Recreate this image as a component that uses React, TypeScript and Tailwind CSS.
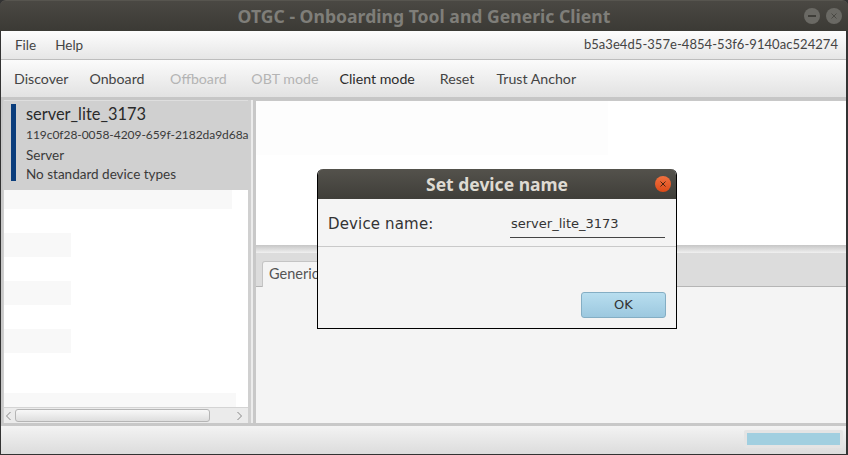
import React from "react";

function Rows() {
  return (
    <div className="flex-1 flex flex-col min-h-0 bg-white overflow-hidden">
      <div className="h-[19px] w-[228px] shrink-0 bg-[#f8f8f8]" />
      <div className="h-[24px] shrink-0" />
      <div className="h-[24px] w-[67px] shrink-0 bg-[#f8f8f8]" />
      <div className="h-[24px] shrink-0" />
      <div className="h-[24px] w-[67px] shrink-0 bg-[#f8f8f8]" />
      <div className="h-[24px] shrink-0" />
      <div className="h-[24px] w-[67px] shrink-0 bg-[#f8f8f8]" />
      <div className="h-[40px] shrink-0" />
      <div className="h-[14px] w-[232px] shrink-0 bg-[#f8f8f8]" />
    </div>
  );
}

export default function App() {
  return (
    <div className="relative w-[848px] h-[455px] overflow-hidden bg-[#333] font-['Lato','Liberation_Sans',sans-serif]">
      <div className="h-[31px] rounded-t-[6px] bg-gradient-to-b from-[#4a4843] to-[#3b3a35] flex items-center justify-center relative border-t border-[#57554f]">
        <span className="font-['Noto_Sans',sans-serif] font-bold text-[17.6px] text-[#7f7e79]">
          OTGC - Onboarding Tool and Generic Client
        </span>
        <div className="absolute right-[6px] top-[7px] flex gap-[6px]">
          <div className="w-[16px] h-[16px] rounded-full bg-[#6a6964] flex items-center justify-center">
            <div className="w-[8px] h-[1.5px] bg-[#3f3e39]" />
          </div>
          <div className="w-[16px] h-[16px] rounded-full bg-[#6a6964] flex items-center justify-center">
            <svg width="8" height="8" viewBox="0 0 8 8">
              <path d="M1.5 1.5l5 5M6.5 1.5l-5 5" stroke="#4a4944" strokeWidth="1" />
            </svg>
          </div>
        </div>
      </div>
      <div className="h-[423px] ml-px mr-[2px] flex flex-col bg-[#f4f4f4]">
        <div className="h-[29px] shrink-0 bg-gradient-to-b from-[#fdfdfd] to-[#e6e6e6] border-b border-[#bdbdbd] flex items-center justify-between pl-[14px] pr-[8px] text-[13.5px] text-[#444]">
          <div className="flex gap-[19px]">
            <span>File</span>
            <span>Help</span>
          </div>
          <span className="text-[13px] tracking-[0.05px]">b5a3e4d5-357e-4854-53f6-9140ac524274</span>
        </div>
        <div className="h-[40px] shrink-0 bg-gradient-to-b from-[#fbfbfb] to-[#e2e2e2] border-b-[3px] border-[#c6c6c6] flex items-center pl-[13px] text-[14.2px] text-[#444]">
          <span>Discover</span>
          <span className="ml-[21px]">Onboard</span>
          <span className="ml-[25.6px] text-[#b4b4b4]">Offboard</span>
          <span className="ml-[24.6px] text-[#b4b4b4]">OBT mode</span>
          <span className="ml-[21px] text-[#2c2c2c]">Client mode</span>
          <span className="ml-[25px]">Reset</span>
          <span className="ml-[22px]">Trust Anchor</span>
        </div>
        <div className="flex-1 flex min-h-0 bg-[#c8c8c8]">
          <div className="w-[248px] shrink-0 ml-[2px] flex flex-col bg-white border-r-[3px] border-l-[1px] border-[#d0d0d0]">
            <div className="h-[90px] shrink-0 bg-[#d0d0d0] border-t border-[#dedede] relative pl-[22px] pt-[2px] text-[#3a3a3a]">
              <div className="absolute left-[7px] top-[3px] w-[5px] h-[77px] bg-[#0a3d7c]" />
              <div className="text-[16.4px] leading-[22px] text-[#2a2a2a]">server_lite_3173</div>
              <div className="text-[12px] leading-[20px] tracking-[-0.05px] whitespace-nowrap">119c0f28-0058-4209-659f-2182da9d68a</div>
              <div className="text-[13.5px] leading-[20px]">Server</div>
              <div className="text-[13.5px] leading-[19px]">No standard device types</div>
            </div>
            <Rows />
            <div className="h-[16px] shrink-0 bg-[#ebebeb] border-t border-[#d4d4d4] flex items-center justify-between pl-px">
              <svg width="7" height="10" viewBox="0 0 7 10"><path d="M5.5 1L1.5 5l4 4" fill="none" stroke="#888" /></svg>
              <div className="w-[195px] h-[13px] rounded-[3px] border border-[#b5b5b5] bg-gradient-to-b from-[#f8f8f8] to-[#dedede] mr-auto ml-[3px]" />
              <svg width="7" height="10" viewBox="0 0 7 10" className="mr-[5px]"><path d="M1.5 1l4 4-4 4" fill="none" stroke="#888" /></svg>
            </div>
          </div>
          <div className="w-[2px] shrink-0 bg-[#ececec]" />
          <div className="flex-1 flex flex-col min-w-0 mt-[1px] ml-[3px]">
            <div className="h-[144px] shrink-0 bg-white">
              <div className="h-[54px] w-[352px] bg-[#fdfdfd]" />
            </div>
            <div className="h-[8px] shrink-0 bg-gradient-to-b from-[#c6c6c6] to-[#f0f0f0]" />
            <div className="h-[34px] shrink-0 bg-[#dcdcdc] border-b border-[#b5b5b5] pl-[6px] pt-[8px]">
              <div className="w-[70px] h-[26px] bg-[#f4f4f4] border border-b-0 border-[#c4c4c4] rounded-t-[3px] pl-[6px] text-[14.5px] leading-[24px] text-[#555]">
                Generic
              </div>
            </div>
            <div className="flex-1 bg-[#f4f4f4]" />
          </div>
        </div>
        <div className="h-[31px] shrink-0 border-t-[3px] border-[#c8c8c8] bg-gradient-to-b from-[#f3f3f3] to-[#dcdcdc] flex items-center justify-end pr-[3px]">
          <div className="w-[99px] h-[18px] mb-[2px] border-[3px] border-[#e4e4e4] bg-[#a1cfe0] rounded-[2px]" />
        </div>
      </div>
      <div className="absolute left-[317px] top-[169px] w-[360px] h-[160px] flex flex-col rounded-t-[6px] overflow-hidden border-x border-b border-black bg-[#f4f4f4] font-['DejaVu_Sans',sans-serif]">
        <div className="h-[30px] -mx-px shrink-0 bg-gradient-to-b from-[#54524c] to-[#3f3e39] flex items-center justify-center relative">
          <span className="font-['Noto_Sans',sans-serif] font-bold text-[17.5px] text-[#dfdbd2]">Set device name</span>
          <div className="absolute right-[6px] top-[7px] w-[16px] h-[16px] rounded-full bg-gradient-to-b from-[#f0703e] to-[#dd4a16] flex items-center justify-center">
            <svg width="8" height="8" viewBox="0 0 8 8">
              <path d="M1.5 1.5l5 5M6.5 1.5l-5 5" stroke="#4a2412" strokeWidth="1" />
            </svg>
          </div>
        </div>
        <div className="h-[48px] shrink-0 border-b border-[#c9c9c9] flex items-center pl-[10px] pr-[11px] text-[#333]">
          <span className="text-[15px] w-[182px] tracking-[0.15px] mt-[3px]">Device name:</span>
          <div className="flex-1 h-[29px] mt-[2px] border-b border-[#444] pl-px text-[13px] leading-[30px]">
            server_lite_3173
          </div>
        </div>
        <div className="flex-1 flex justify-end items-start pt-[45px] pr-[10px]">
          <div className="w-[85px] h-[26px] rounded-[3px] border border-[#84aec4] bg-gradient-to-b from-[#b8deef] to-[#9cc8df] flex items-center justify-center text-[13px] text-[#333]">
            OK
          </div>
        </div>
      </div>
    </div>
  );
}
